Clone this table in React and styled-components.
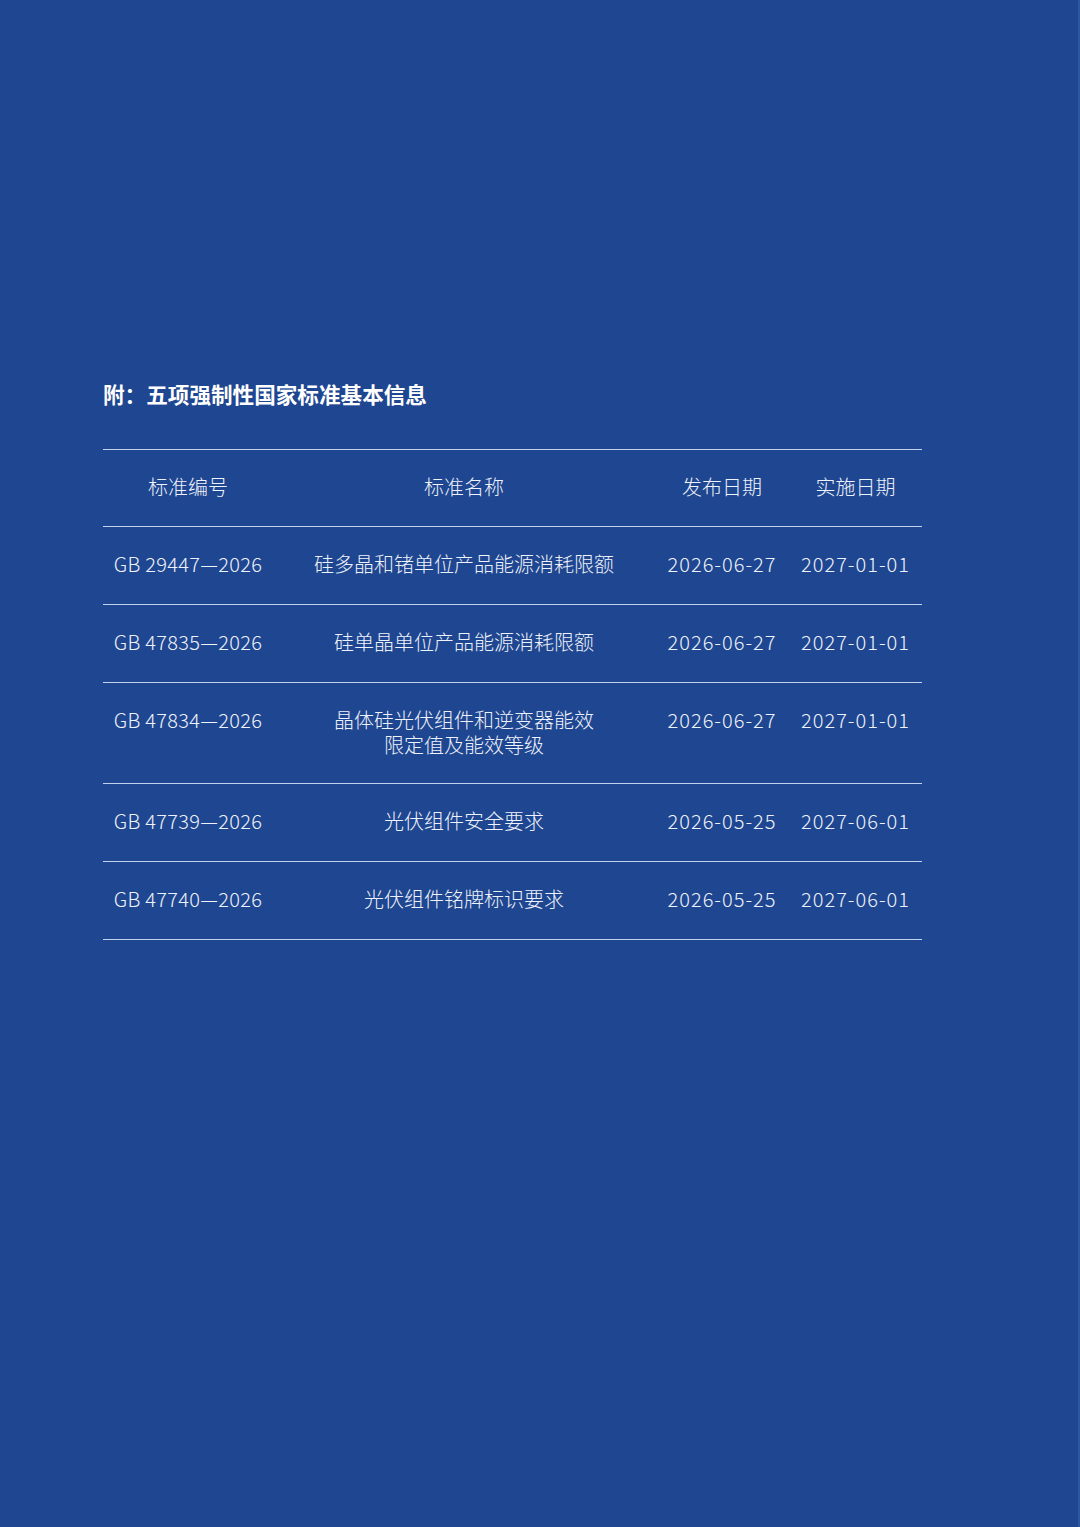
import styled, { createGlobalStyle } from "styled-components";

const GlobalStyle = createGlobalStyle`
    html, body {
        margin: 0;
        padding: 0;
        background: #1f4690;
    }
`;

const columns = [
    { key: "code", label: "标准编号", width: 170 },
    { key: "name", label: "标准名称", width: 382 },
    { key: "issued", label: "发布日期", width: 134 },
    { key: "effective", label: "实施日期", width: 133 },
];

const standards = [
    { code: "GB 29447—2026", name: ["硅多晶和锗单位产品能源消耗限额"], issued: "2026-06-27", effective: "2027-01-01" },
    { code: "GB 47835—2026", name: ["硅单晶单位产品能源消耗限额"], issued: "2026-06-27", effective: "2027-01-01" },
    { code: "GB 47834—2026", name: ["晶体硅光伏组件和逆变器能效", "限定值及能效等级"], issued: "2026-06-27", effective: "2027-01-01" },
    { code: "GB 47739—2026", name: ["光伏组件安全要求"], issued: "2026-05-25", effective: "2027-06-01" },
    { code: "GB 47740—2026", name: ["光伏组件铭牌标识要求"], issued: "2026-05-25", effective: "2027-06-01" },
];

const App = () => {
    return (
        <>
            <GlobalStyle />
            <Page>
                <Title>附：五项强制性国家标准基本信息</Title>
                <Table>
                    <colgroup>
                        {columns.map(col => (
                            <col key={col.key} style={{ width: col.width }} />
                        ))}
                    </colgroup>
                    <thead>
                        <Row>
                            {columns.map(col => (
                                <HeadCell key={col.key}>{col.label}</HeadCell>
                            ))}
                        </Row>
                    </thead>
                    <tbody>
                        {standards.map(item => (
                            <Row key={item.code}>
                                <Cell $spacing={0.3}>{item.code}</Cell>
                                <Cell $multi={item.name.length > 1}>
                                    {item.name.map(line => (
                                        <NameLine key={line}>{line}</NameLine>
                                    ))}
                                </Cell>
                                <Cell $spacing={1}>{item.issued}</Cell>
                                <Cell $spacing={1}>{item.effective}</Cell>
                            </Row>
                        ))}
                    </tbody>
                </Table>
            </Page>
        </>
    );
};

const Page = styled.div`
    box-sizing: border-box;
    width: 1080px;
    min-height: 1527px;
    padding: 379px 0 0 103px;
    background: #1f4690;
    border-right: 2px solid #2b56a0;
    font-family: "Noto Sans CJK SC", "Noto Sans", sans-serif;
    color: #f1f4fb;
`;

const Title = styled.h2`
    margin: 0 0 40px 0;
    font-size: 21.6px;
    line-height: 30px;
    font-weight: 700;
    color: #ffffff;
`;

const Table = styled.table`
    width: 819px;
    border-collapse: collapse;
    table-layout: fixed;
`;

const Row = styled.tr`
    border-top: 1px solid #c3d2ee;
    border-bottom: 1px solid #c3d2ee;
`;

const Cell = styled.td`
    padding: 24px 0 ${p => (p.$multi ? 26 : 28)}px;
    text-align: center;
    vertical-align: top;
    font-size: 20px;
    line-height: 25px;
    font-weight: 300;
    letter-spacing: ${p => p.$spacing || 0}px;
    white-space: nowrap;
    color: #eef2fa;
`;

const HeadCell = styled(Cell).attrs({ as: "th" })`
    padding: 24px 0 27px;
    font-weight: 300;
`;

const NameLine = styled.div`
    line-height: 25px;
`;

export default App;
